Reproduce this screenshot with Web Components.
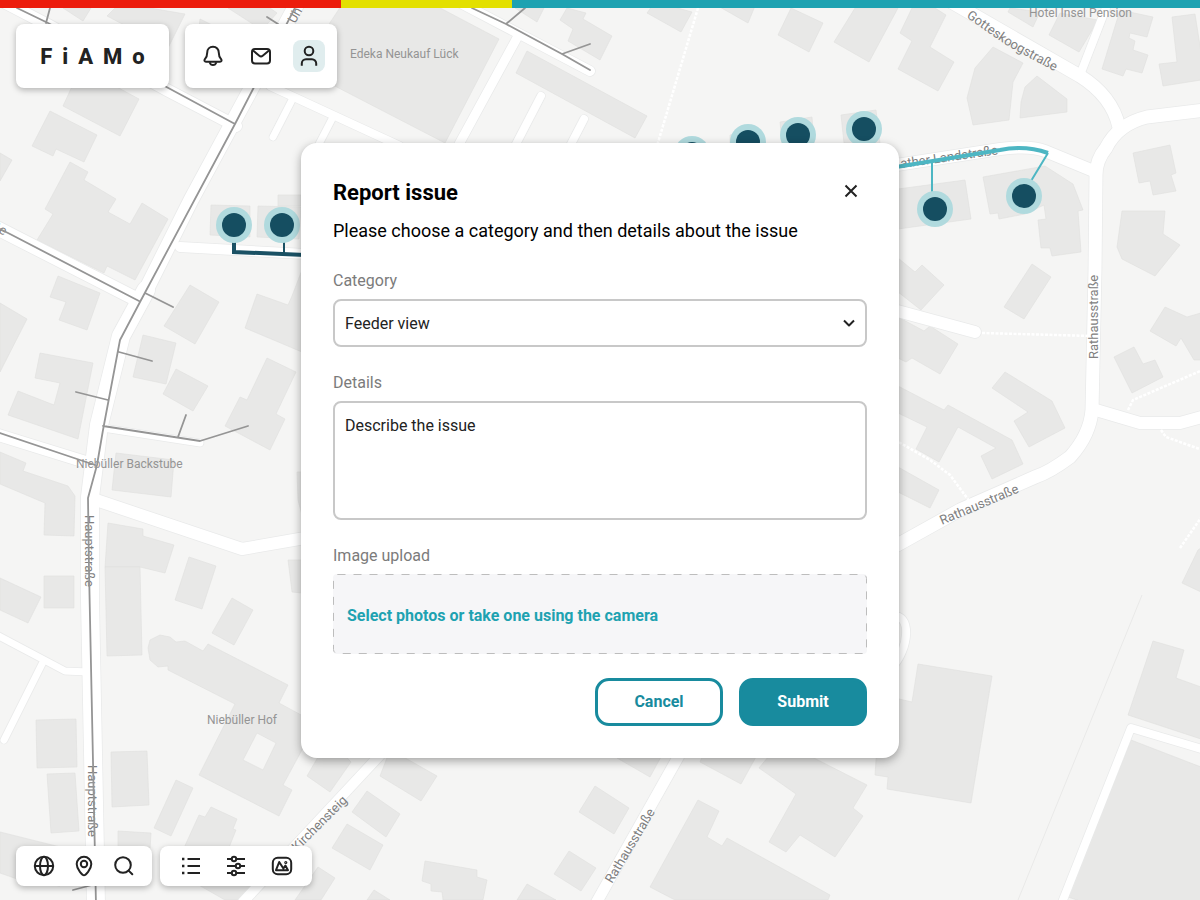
<!DOCTYPE html>
<html lang="en">
<head>
<meta charset="utf-8">
<meta name="viewport" content="width=device-width, initial-scale=1">
<title>FiAMo – Report issue</title>
<style>
  body {
    margin: 0;
    font-family: Roboto, "Noto Sans", sans-serif;
    color: #222;
  }
</style>
</head>
<body>
<fiamo-app>
  <street-map slot="map"></street-map>

  <tool-card slot="top" kind="brand"><brand-name>FiAMo</brand-name></tool-card>
  <tool-card slot="top" kind="main">
    <icon-button icon="bell" label="Notifications" size="32"></icon-button>
    <icon-button icon="mail" label="Messages" size="32"></icon-button>
    <icon-button icon="user" label="Account" size="32" active></icon-button>
  </tool-card>

  <tool-card slot="bottom" kind="small">
    <icon-button icon="globe" label="Map layers"></icon-button>
    <icon-button icon="pin" label="Locate"></icon-button>
    <icon-button icon="search" label="Search"></icon-button>
  </tool-card>
  <tool-card slot="bottom" kind="wide">
    <icon-button icon="list" label="List"></icon-button>
    <icon-button icon="sliders" label="Filters"></icon-button>
    <icon-button icon="image" label="Images"></icon-button>
  </tool-card>

  <issue-dialog slot="dialog" heading="Report issue">
    <span slot="intro">Please choose a category and then details about the issue</span>
    <select-field label="Category" options="Feeder view|Network view|Map data"></select-field>
    <text-field label="Details" hint="Describe the issue"></text-field>
    <upload-field label="Image upload">Select photos or take one using the camera</upload-field>
    <action-button slot="actions" kind="outline">Cancel</action-button>
    <action-button slot="actions" kind="solid">Submit</action-button>
  </issue-dialog>
</fiamo-app>

<script>
const define = (name, render) => {
  customElements.define(name, class extends HTMLElement {
    constructor() {
      super();
      this.attachShadow({ mode: "open" });
    }
    connectedCallback() {
      this.shadowRoot.innerHTML = render(this);
    }
  });
};

const ICONS = {
  bell: `<path d="M12 2.800c-3.500 0-5.800 2.600-5.800 5.900 0 3.300-.8 4.800-2.300 6.500-1 1.300-.4 2.500 1.100 2.500h14c1.500 0 2.100-1.200 1.100-2.500-1.500-1.700-2.300-3.200-2.300-6.500 0-3.300-2.300-5.900-5.800-5.900z"/><path d="M8.600 18.200c.6 1.800 1.800 2.900 3.400 2.900s2.800-1.100 3.400-2.900"/>`,
  mail: `<rect x="3" y="5" width="18" height="14.400" rx="3"/><path d="m4 6.500 6.300 5.300a2.700 2.700 0 0 0 3.400 0L20 6.500"/>`,
  user: `<circle cx="12" cy="7" r="4.300"/><path d="M4.800 21.700v-2.200a4.200 4.200 0 0 1 4.200-4.200h6a4.200 4.200 0 0 1 4.200 4.200v2.200"/>`,
  globe: `<circle cx="12" cy="12" r="9.200"/><ellipse cx="12" cy="12" rx="4" ry="9.200"/><path d="M3 12h18"/>`,
  pin: `<path d="M12 21.300c-1.200 0-7.300-5.500-7.300-11.200a7.300 7.300 0 0 1 14.600 0c0 5.700-6.100 11.200-7.300 11.200z"/><circle cx="12" cy="10" r="3.200"/>`,
  search: `<circle cx="11" cy="11" r="7.800"/><path stroke-linecap="round" d="m16.600 16.600 3.700 3.700"/>`,
  list: `<path d="M9.500 5H22M9.500 12H22M9.500 19H22"/><path stroke-width="2.600" d="M4 5h2.400M4 12h2.400M4 19h2.400"/>`,
  sliders: `<path d="M3 5h4.700M12.300 5H21M3 12h8.700M16.300 12H21M3 19h4.700M12.300 19H21"/><circle cx="10" cy="5" r="2.200"/><circle cx="14" cy="12" r="2.200"/><circle cx="10" cy="19" r="2.200"/>`,
  image: `<rect x="2.800" y="3.800" width="18.400" height="16.400" rx="5"/><path d="M6 16.200 9.200 8l4.200 6.500 2-3 2.600 4.700z"/><circle cx="15.800" cy="8.500" r=".6"/>`,
  close: `<path d="m6.500 6.500 11 11m0-11-11 11"/>`,
  chevron: `<path d="m7 9.500 5 5 5-5"/>`
};
const icon = name => `<svg viewBox="0 0 24 24" width="24" height="24" fill="none" stroke="currentColor" stroke-width="2" stroke-linejoin="round" aria-hidden="true">${ICONS[name]}</svg>`;

define("fiamo-app", () => `
  <style>
    :host { display: grid; min-height: 100vh; grid-template: minmax(100vh, auto) / minmax(0, 1fr); overflow: hidden; }
    .layer { grid-area: 1 / 1; min-width: 0; }
    .map { display: grid; }
    .chrome { display: flex; flex-direction: column; justify-content: space-between; }
    .strip { display: flex; height: 8px; background: #1ea2b1; margin-bottom: 16px; }
    .strip i { flex: 171; background: #e3e000; }
    .strip i:first-child { flex: 341; background: #ec1c0c; }
    .strip i:last-child { flex: 688; background: #1ea2b1; }
    .top { display: flex; gap: 16px; padding: 0 16px; }
    .bottom { display: flex; gap: 8px; padding: 0 16px 14px; }
    .dialog { display: grid; place-items: center; padding-top: 1px; box-sizing: border-box; }
  </style>
  <div class="layer map"><slot name="map"></slot></div>
  <div class="layer chrome">
    <header>
      <div class="strip"><i></i><i></i><i></i></div>
      <div class="top"><slot name="top"></slot></div>
    </header>
    <footer class="bottom"><slot name="bottom"></slot></footer>
  </div>
  <div class="layer dialog"><slot name="dialog"></slot></div>`);

define("tool-card", () => `
  <style>
    :host { display: flex; align-items: center; box-sizing: border-box; background: #fff; border-radius: 8px; box-shadow: 0 2px 6px rgba(0,0,0,.28); }
    :host([kind="brand"]) { height: 64px; width: 153px; padding: 2px 0 0; justify-content: center; }
    :host([kind="main"]) { height: 64px; padding: 0 12px; gap: 16px; }
    :host([kind="small"]) { height: 40px; padding: 0 16px; gap: 16px; }
    :host([kind="wide"]) { height: 40px; padding: 0 18px; gap: 22px; }
  </style>
  <slot></slot>`);

define("brand-name", () => `
  <style>
    :host { display: block; font-size: 22px; line-height: 32px; font-weight: 800; letter-spacing: 10px; margin-right: -10px; color: #222; }
  </style>
  <slot></slot>`);

define("icon-button", el => `
  <style>
    :host { display: block; }
    button { display: grid; place-items: center; width: ${el.getAttribute("size") || 24}px; height: ${el.getAttribute("size") || 24}px; padding: 0; border: 0; border-radius: 8px; background: ${el.hasAttribute("active") ? "#e0edee" : "none"}; color: #222; cursor: pointer; }
    svg { display: block; }
  </style>
  <button type="button" aria-label="${el.getAttribute("label")}">${icon(el.getAttribute("icon"))}</button>`);

define("issue-dialog", el => `
  <style>
    :host { display: block; width: 100%; max-width: 598px; box-sizing: border-box; }
    section { background: #fff; border-radius: 16px; padding: 32px; box-shadow: 0 3px 10px rgba(0,0,0,.34); }
    header { display: flex; justify-content: space-between; align-items: flex-start; margin-bottom: 6px; }
    h1 { margin: 0; font-size: 22px; line-height: 36px; font-weight: 700; color: #000; }
    p { margin: 0 0 24px; font-size: 18px; line-height: 28px; color: #000; }
    form { display: flex; flex-direction: column; gap: 24px; }
    .actions { display: flex; justify-content: flex-end; gap: 16px; }
  </style>
  <section role="dialog" aria-labelledby="title">
    <header>
      <h1 id="title">${el.getAttribute("heading")}</h1>
      <icon-button icon="close" label="Close" size="32"></icon-button>
    </header>
    <p><slot name="intro"></slot></p>
    <form>
      <slot></slot>
      <div class="actions"><slot name="actions"></slot></div>
    </form>
  </section>`);

const FIELD = `
    :host { display: flex; flex-direction: column; gap: 6px; }
    .label { font-size: 16px; line-height: 24px; color: #7b7b7b; }`;

define("select-field", el => `
  <style>${FIELD}
    .box { display: grid; align-items: center; }
    .box > * { grid-area: 1 / 1; }
    select { appearance: none; width: 100%; height: 48px; margin: 0; padding: 2px 40px 0 10px; border: 2px solid #c8c8c8; border-radius: 8px; background: #fff; font: 400 16px/20px Roboto, sans-serif; color: #222; }
    svg { justify-self: end; margin-right: 6px; pointer-events: none; }
  </style>
  <label class="label" for="control">${el.getAttribute("label")}</label>
  <div class="box">
    <select id="control">${el.getAttribute("options").split("|").map(o => `<option>${o}</option>`).join("")}</select>
    ${icon("chevron")}
  </div>`);

define("text-field", el => `
  <style>${FIELD}
    textarea { display: block; width: 100%; height: 119px; box-sizing: border-box; margin: 0; padding: 12px 10px; border: 2px solid #c8c8c8; border-radius: 8px; resize: none; background: #fff; font: 400 16px/22px Roboto, sans-serif; color: #222; }
    textarea::placeholder { color: #222; opacity: 1; }
  </style>
  <label class="label" for="control">${el.getAttribute("label")}</label>
  <textarea id="control" placeholder="${el.getAttribute("hint")}"></textarea>`);

define("upload-field", el => `
  <style>${FIELD}
    .zone { display: grid; align-items: center; height: 80px; border-radius: 4px; background: #f6f6f8; cursor: pointer; }
    .zone > * { grid-area: 1 / 1; }
    .text { padding: 4px 14px 0; font-size: 16px; line-height: 24px; font-weight: 700; color: #1ea2b1; }
    input { width: 100%; height: 100%; margin: 0; opacity: 0; cursor: pointer; }
    rect { fill: none; stroke: #bdbdbd; stroke-width: 1; stroke-dasharray: 8 8; width: calc(100% - 1px); height: calc(100% - 1px); }
  </style>
  <label class="label" for="control">${el.getAttribute("label")}</label>
  <div class="zone">
    <svg width="100%" height="100%" aria-hidden="true"><rect x=".5" y=".5" rx="4"/></svg>
    <label class="text" for="control"><slot></slot></label>
    <input id="control" type="file" accept="image/*" multiple>
  </div>`);

define("action-button", el => `
  <style>
    :host { display: block; }
    button { width: 128px; height: 48px; border: 3px solid #188b9e; border-radius: 14px; font: 700 16px/20px Roboto, sans-serif; color: #188b9e; background: #fff; cursor: pointer; }
    .solid { background: #188b9e; color: #fff; }
  </style>
  <button type="button" class="${el.getAttribute("kind")}"><slot></slot></button>`);

/* ---- map data, in the map's own 1200 x 900 coordinate space ---- */

const BUILDINGS = [
  "63,8 91,8 83,21", "115,8 150,8 185,14 168,48 107,16", "200,19 212,25 195,60", "228,8 270,8 277,13 262,30",
  "345,0 425,0 499,39 445,143 300,68", "63,106 120,136 139,99 115,86 75,80",
  "50,111 97,135 84,162 56,149 53,156 32,146", "0,153 12,160 0,181",
  "70,162 88,172 84,180 116,199 108,212 130,224 142,203 168,219 135,280 107,266 104,273 37,240 53,214 45,209",
  "58,276 100,293 87,330 59,320 66,302 50,297", "190,285 219,302 195,344 164,326",
  "257,294 288,305 292,296 302,270 302,352 245,328",
  "211,205 250,206 250,237 210,235", "258,206 301,207 299,239 257,237", "278,195 301,195 301,206 278,206",
  "0,303 27,319 0,372", "40,353 93,363 78,439 8,415 18,391 54,405 60,383 35,378",
  "143,335 176,343 166,384 133,377", "176,369 208,386 193,411 163,394",
  "267,358 296,372 276,414 285,419 270,450 225,426 240,397 247,400",
  "116,453 174,460 171,497 112,490",
  "0,452 26,463 23,471 68,486 75,496 74,536 44,535 45,503 0,484",
  "108,523 143,529 143,536 174,545 165,573 140,567 105,567", "105,567 140,567 142,655 107,656",
  "189,557 216,566 202,609 175,600", "44,576 74,576 74,608 44,608", "0,578 41,597 28,623 0,610",
  "297,472 302,472 302,515 298,500", "288,560 302,560 302,593 292,592", "232,598 253,610 234,645 212,633",
  "36,720 76,719 77,767 37,768", "111,752 147,751 149,805 112,807", "47,774 75,773 79,831 51,833",
  "176,780 193,788 171,836 154,828", "199,815 205,817 211,807 237,819 233,829 236,830 228,850 183,850",
  "118,831 151,833 150,850 118,850", "0,832 60,847 60,886 20,880 0,873", "190,880 250,886 242,900 225,900",
  "307,776 330,792 351,762 335,745 325,745", "380,776 421,801 437,776 400,755 390,750",
  "367,791 400,814 386,837 352,812", "347,824 383,845 370,870 332,848",
  "425,861 477,870 477,877 487,880 483,900 443,900 442,892 431,891 431,884 422,881",
  "318,867 335,878 321,900 295,900", "374,890 390,900 367,900",
  "595,786 629,808 614,834 579,812", "569,851 596,868 581,891 554,874", "527,884 556,900 517,900",
  "617,758 650,777 662,755 620,750",
  "698,800 719,811 707,837 722,846 727,838 830,895 828,900 675,900 650,887",
  "700,762 741,784 757,755 705,750",
  "759,768 768,757 812,757 867,785 853,808 863,816 835,857 800,835 786,852 769,842 796,794",
  "918,664 992,676 971,803 887,789 888,777 875,775 880,699 899,699 912,702",
  "1153,641 1184,650 1176,678 1201,687 1201,739 1128,715", "1131,740 1201,767 1201,901 1080,901 1068,897",
  "1198,550 1201,548 1201,592 1182,583",
  "898,258 915,272 922,265 944,285 921,310 898,292", "1032,264 1051,277 1024,319 1004,307",
  "1122,211 1165,211 1163,234 1180,245 1155,276 1122,259 1117,247",
  "1165,307 1187,317 1201,313 1201,360 1194,360 1181,338 1176,346 1150,331",
  "1114,357 1134,347 1143,364 1155,360 1163,377 1132,393",
  "898,317 924,331 930,326 958,344 940,374 912,358 906,362 898,358",
  "1005,372 1052,401 1065,428 1029,447 1014,421 1028,412 992,388",
  "898,386 944,410 948,405 1012,440 1023,464 992,479 981,456 996,448 958,427 939,462 916,449 927,427 898,413",
  "898,467 939,490 930,508 898,492",
  "791,8 823,23 809,52 778,35", "855,8 898,8 869,62 834,42",
  "912,8 935,8 946,15 930,47 954,62 938,91 898,69 912,41 900,33",
  "993,47 1023,63 1013,82 1009,120 973,125 967,98 975,68", "1037,76 1067,99 1067,112 1020,118 1021,102 1025,87",
  "1010,8 1040,12 1033,27 1008,12", "1060,13 1098,20 1079,52 1049,35",
  "1120,10 1153,17 1147,37 1130,33 1129,38 1135,41 1133,50 1148,55 1142,73 1126,69 1123,76 1102,69",
  "1172,17 1195,14 1201,52 1201,80 1163,86 1159,64 1177,62",
  "1133,153 1170,145 1176,173 1171,175 1176,191 1153,195 1150,181 1139,183", "898,189 965,180 971,219 898,229",
  "983,177 1045,166 1073,184 1083,210 1078,211 1081,252 1052,256 1050,248 1041,248 1038,220 1046,219 1044,205 1025,214 999,219 998,213 990,214",
  "841,115 876,110 880,143 844,143", "780,122 812,117 814,143 782,143", "730,135 745,132 745,143 730,143",
  "515,8 544,8 537,22", "567,8 586,13 583,19 612,36 600,60 568,41 573,29 560,20",
  "527,51 647,116 635,138 516,73", "652,6 670,6 692,12 681,32 647,13", "718,6 755,6 748,23"
];

/* [width, path] */
const ROADS = [
  [15, "M299 0 191 200 146 290"], [18, "M146 290 121 336 99 425 90 497 90 600 96 905"],
  [12, "M0 0 48 25 167 90 236 126"], [14, "M-5 227 138 300"], [10, "M180 247 305 254"],
  [8, "M270 86 400 146"], [7, "M293 98 273 137M333 117 318 146"],
  [10, "M455 0 590 71"], [9, "M518 36 458 146"], [8, "M541 96 515 146M584 119 570 146"],
  [13, "M948 0 1080 76Q1112 96 1119 127"],
  [13, "M1205 110 1147 117Q1118 124 1106 148 1096 160 1096 175L1095 270 1092 410Q1090 435 1070 457 1050 472 1035 477L960 510 890 549"],
  [8, "M1106 8 1080 75"], [12, "M890 166 1000 149Q1030 145 1045 151L1096 172"], [12, "M890 309 975 332"],
  [12, "M1096 410 1140 423 1180 423 1205 416"], [12, "M-5 434 92 464"], [7, "M103 428 200 443"],
  [12, "M93 499 242 549 305 538"], [7, "M-5 634 65 671 88 672M42 664 4 740"],
  [10, "M380 755 243 902"], [11, "M681 752 595 905"], [8, "M1061 905 1131 728 1205 750"], [8, "M890 616C914 612 908 650 893 666"]
];
const FOOTWAYS = "M698 8 657 146M982 333 1090 336M1128 410 1133 400 1205 369M1161 430 1166 437 1205 451M895 440 930 460 950 475 970 502M1180 548 1205 512";
const PIPES = "M17 8 48 23 235 124M50 8 46 23M299 0 235 124 140 302 120 340 103 430 97 465 88 498 89 570 96 905M267 17 278 24M0 229 10 234 139 301M145 293 173 307M119 352 152 361M76 392 108 400M103 426 200 441 248 426M178 437 186 415M0 433 83 461 95 465M472 8 506 24 562 54 590 70M506 24 525 8M562 54 590 44M73 890 92 885";
const NODES = [[234,225],[282,225],[692,154],[748,142],[798,135],[864,129],[935,209],[1024,196]];

/* [text, x, y, rotation] */
const STREETS = [
  ["Rathausstraße", 1098, 359, -90], ["Rathausstraße", 942, 525, -23], ["Rathausstraße", 612, 884, -59],
  ["Hauptstraße", 85, 515, 90], ["Hauptstraße", 88, 765, 90], ["Kirchensteig", 297, 852, -45],
  ["Uh", 295, 24, -61], ["ße", -9, 229, 27], ["ather Landstraße", 901, 168, -8]
];
const PLACES = [["Edeka Neukauf Lück", 350, 58], ["Hotel Insel Pension", 1029, 17], ["Niebüller Backstube", 76, 468], ["Niebüller Hof", 207, 724]];

define("street-map", () => `
  <style>
    :host { display: grid; min-width: 0; contain: size; background: #f5f5f4; }
    svg { display: block; width: 100%; height: 100%; }
    .building { fill: #e8e8e7; stroke: #dfdfde; stroke-width: .6; }
    .road { fill: none; stroke-linecap: round; stroke-linejoin: round; }
    .case { stroke: #e9eaea; }
    .fill { stroke: #fff; }
    .footway { fill: none; stroke: #fff; stroke-width: 2.500; stroke-dasharray: 3 1.500; }
    .pipe { fill: none; stroke: #959595; stroke-width: 1.800; stroke-linecap: round; stroke-linejoin: round; }
    text { font-family: Roboto, sans-serif; }
    .street { font-size: 13px; fill: #808080; }
    .place { font-size: 12px; fill: #949494; }
  </style>
  <svg viewBox="0 0 1200 900" preserveAspectRatio="xMidYMid slice" aria-label="Street map">
    ${BUILDINGS.map(p => `<polygon class="building" points="${p}"/>`).join("")}
    <path class="building" fill-rule="evenodd" d="M148 648 150 640 160 635 170 637 176 642 185 641 203 651 208 644 288 685 279 703 303 716 303 748 283 785 292 790 279 816 199 775 235 704 168 670 168 666 158 667 150 660zM257 733 276 743 263 770 243 760z"/>
    <path d="M1142 595 1018 900" stroke="#e9e9e8" fill="none"/>
    ${ROADS.map(([w, d]) => `<path class="road case" stroke-width="${w + 1.5}" d="${d}"/>`).join("")}
    ${ROADS.map(([w, d]) => `<path class="road fill" stroke-width="${w}" d="${d}"/>`).join("")}
    <path class="footway" d="${FOOTWAYS}"/>
    ${STREETS.map(([t, x, y, a]) => `<text class="street" transform="translate(${x} ${y}) rotate(${a})">${t}</text>`).join("")}
    <path id="gottes" d="M966 17 1006 45 1056 72" fill="none"/>
    <text class="street"><textPath href="#gottes">Gotteskoogstraße</textPath></text>
    ${PLACES.map(([t, x, y]) => `<text class="place" x="${x}" y="${y}">${t}</text>`).join("")}
    <path class="pipe" d="${PIPES}"/>
    <g fill="none" stroke="#4db6c3">
      <path stroke-width="4" d="M890 168 1000 150Q1025 145 1048 153"/>
      <path stroke-width="2" d="M932 161V195M1048 153 1031 181"/>
    </g>
    <g fill="none" stroke="#1a5164">
      <path stroke-width="4" d="M234 240V252L305 255"/>
      <path stroke-width="2" d="M284 240V254"/>
    </g>
    ${NODES.map(([x, y]) => `<circle cx="${x}" cy="${y}" r="18" fill="#b0dade"/><circle cx="${x}" cy="${y}" r="12" fill="#154e61"/>`).join("")}
  </svg>`);
</script>
</body>
</html>
